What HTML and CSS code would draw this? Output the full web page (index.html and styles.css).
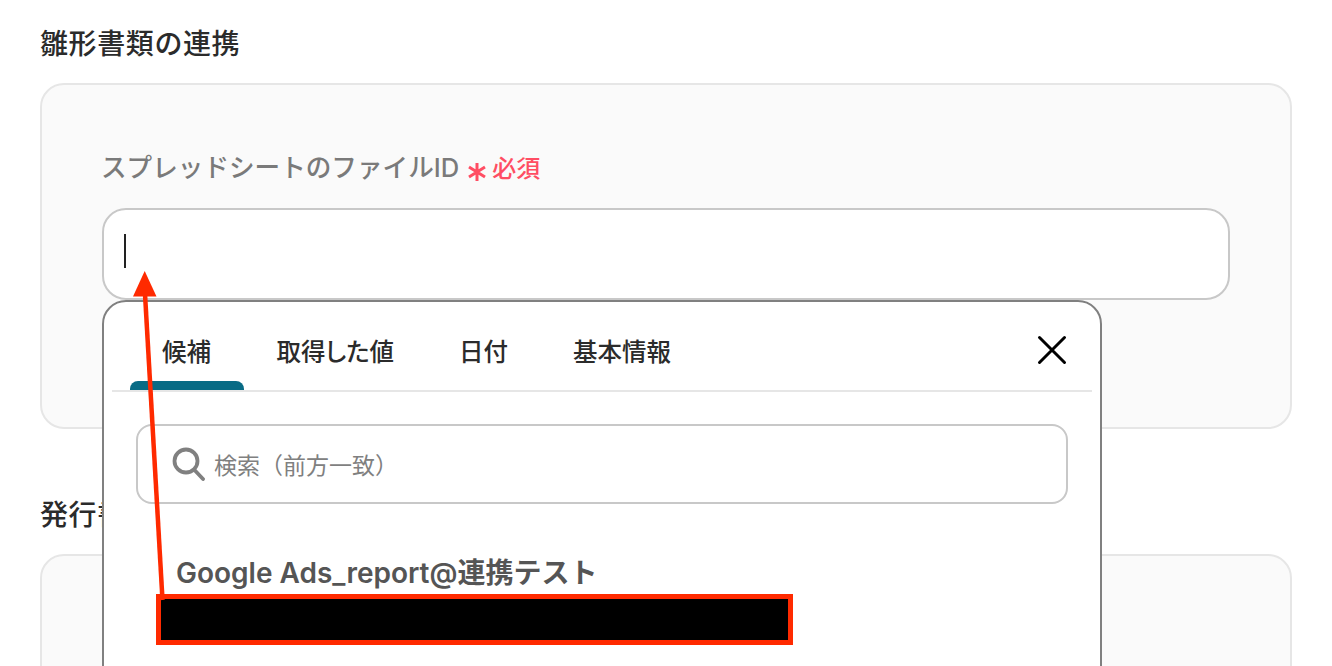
FILE: index.html
```html
<!DOCTYPE html>
<html lang="ja">
<head>
<meta charset="utf-8">
<title>雛形書類の連携</title>
<link rel="stylesheet" href="styles.css">
</head>
<body>
<main class="page">
  <h2 class="section-title">雛形書類の連携</h2>
  <section class="card card-first">
    <div class="label-row">
      <span class="label">スプレッドシートのファイルID</span>
      <svg class="asterisk" width="18" height="18" viewBox="0 0 18 18"><path d="M9 0V18M1 4 17 14M17 4 1 14" stroke="#ff4d63" stroke-width="3" fill="none"/></svg>
      <span class="required">必須</span>
    </div>
    <div class="field">
      <div class="input"><span class="caret"></span></div>
      <div class="popup">
        <div class="tabs">
          <div class="tab-list">
            <span class="tab tab-active">候補</span>
            <span class="tab">取得した値</span>
            <span class="tab">日付</span>
            <span class="tab">基本情報</span>
          </div>
          <svg class="close" width="30" height="30" viewBox="0 0 30 30"><path d="M2.500 2.500 27.500 27.500M27.500 2.500 2.500 27.500" stroke="#000" stroke-width="3" stroke-linecap="round" fill="none"/></svg>
        </div>
        <div class="popup-body">
          <div class="search">
            <svg class="search-icon" width="34" height="36" viewBox="0 0 34 36"><circle cx="15" cy="15" r="11.500" stroke="#808080" stroke-width="3.800" fill="none"/><path d="M23.500 24 32 33" stroke="#808080" stroke-width="3.800" stroke-linecap="round" fill="none"/></svg>
            <span class="placeholder">検索（前方一致）</span>
          </div>
          <div class="option">
            <div class="option-name">Google Ads_report@連携テスト</div>
            <div class="option-id"></div>
          </div>
        </div>
      </div>
    </div>
  </section>
  <h2 class="section-title section-second">発行書類の連携</h2>
  <section class="card card-second"></section>
</main>
<svg class="arrow" width="40" height="340" viewBox="0 0 40 340">
  <path d="M30.500 330 13 24" stroke="#ff2a00" stroke-width="4.500" fill="none"/>
  <path d="M12.700 1 24.500 26.500 1 26.500Z" fill="#ff2a00"/>
</svg>
</body>
</html>
```
FILE: styles.css
```css
* { box-sizing: border-box; }
html, body { margin: 0; height: 666px; overflow: hidden; background: #fff; }
body {
  position: relative;
  font-family: Inter, "Noto Sans CJK JP", sans-serif;
}
.page { height: 666px; overflow: hidden; padding: 25px 40px 0; }
.section-title {
  margin: 0;
  height: 38px;
  font-size: 28px;
  line-height: 38px;
  font-weight: 500;
  letter-spacing: 0.6px;
  color: #2b2b2b;
}
.card {
  background: #fafafa;
  border: 2px solid #e6e6e6;
  border-radius: 24px;
}
.card-first {
  margin-top: 20px;
  height: 346px;
  padding: 65px 60px 0;
}
.section-second { margin-top: 67px; }
.card-second { margin-top: 20px; height: 200px; }
.label-row {
  display: flex;
  align-items: center;
  height: 36px;
  margin-bottom: 22px;
}
.label { margin-left: -1px; font-size: 25.600px; line-height: 36px; font-weight: 500; color: #7a7a7a; }
.asterisk { flex: none; margin: 7px 6px 0 9px; }
.required {
  margin-top: -3px;
  font-size: 24px;
  font-weight: 500;
  color: #ff4d63;
}
.field { position: relative; }
.input {
  display: flex;
  align-items: flex-start;
  width: 1128px;
  height: 92px;
  padding: 24px 0 0 20px;
  background: #fff;
  border: 2px solid #c8c8c8;
  border-radius: 24px;
}
.caret { width: 2px; height: 34px; background: #222; }
.popup {
  position: absolute;
  left: 0;
  top: 92px;
  width: 1000px;
  height: 460px;
  padding: 0 8px;
  background: #fff;
  border: 2px solid #808080;
  border-radius: 24px;
}
.tabs {
  position: relative;
  display: flex;
  align-items: center;
  height: 90px;
  border-bottom: 2px solid #e6e6e6;
}
.tab-list { display: flex; align-items: center; height: 100%; padding-left: 18px; }
.tab {
  position: relative;
  flex: none;
  height: 100%;
  padding: 0 32.500px;
  font-size: 24.500px;
  line-height: 100px;
  font-weight: 500;
  font-feature-settings: "palt";
  color: #2b2b2b;
}
.tab-active { padding: 0 33px 0 32px; }
.tab-active::after {
  content: "";
  position: absolute;
  left: 0;
  right: 0;
  bottom: 0;
  height: 9px;
  background: #086b85;
  border-radius: 8px 8px 0 0;
}
.close { position: absolute; right: 25px; top: 33px; }
.popup-body { padding: 32px 24px 0; }
.search {
  display: flex;
  align-items: center;
  height: 80px;
  padding-left: 33px;
  border: 2px solid #c8c8c8;
  border-radius: 16px;
}
.search-icon { flex: none; margin-right: 9px; }
.placeholder { font-size: 23px; color: #808080; }
.option { margin-top: 50px; }
.option-name {
  padding-left: 40px;
  height: 40px;
  font-size: 28px;
  line-height: 39px;
  font-weight: 600;
  color: #555;
}
.option-id {
  width: 637px;
  height: 51px;
  margin-left: 20px;
  background: #000;
  border: 5px solid #ff2a00;
}
.arrow { position: absolute; left: 132px; top: 270px; }
```
